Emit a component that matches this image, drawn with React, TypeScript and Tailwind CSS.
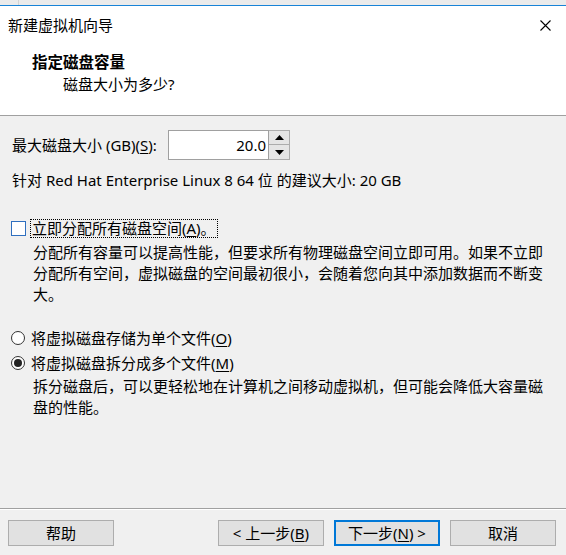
import type { ReactNode } from 'react'

const FONT = "font-['Noto_Sans','Noto_Sans_CJK_SC',sans-serif]"

function Key({ children }: { children: ReactNode }) {
  return <span className="underline underline-offset-2">{children}</span>
}

function Radio({ checked, children }: { checked?: boolean; children: ReactNode }) {
  return (
    <div className="flex items-center h-[20px] pl-[11px]">
      <span className="w-[14px] h-[14px] rounded-full border border-[#333] bg-white flex items-center justify-center">
        {checked && <span className="w-[8px] h-[8px] rounded-full bg-[#222]" />}
      </span>
      <span className="ml-[6px]">{children}</span>
    </div>
  )
}

function Button({ children, primary }: { children: ReactNode; primary?: boolean }) {
  return (
    <div
      className={
        primary
          ? 'w-[106px] h-[26px] flex items-center justify-center bg-[#e1e1e1] border-2 border-[#0078d7]'
          : 'w-[106px] h-[26px] flex items-center justify-center bg-[#e1e1e1] border border-[#adadad]'
      }
    >
      {children}
    </div>
  )
}

export default function App() {
  return (
    <div className={`w-[566px] h-[555px] bg-[#f0f0f0] flex flex-col overflow-hidden text-black text-[15px] ${FONT}`}>
      {/* strip of window behind */}
      <div className="h-[5px] bg-[#ebebeb] flex">
        <div className="ml-[18px] w-px bg-[#d4d4d4]" />
      </div>

      {/* Title + header */}
      <div className="bg-white border-t border-[#1883d7] border-b border-b-[#a0a0a0] h-[111px]">
        <div className="h-[38px] flex items-center justify-between pl-2 pr-[15px]">
          <span className="leading-[20px]">新建虚拟机向导</span>
          <svg width="11" height="11" viewBox="0 0 11 11" fill="none" stroke="#000" strokeWidth="1.1">
            <path d="M0.5 0.5 L10.5 10.5 M10.5 0.5 L0.5 10.5" />
          </svg>
        </div>
        <p className="mt-[8px] pl-8 text-[15.5px] font-bold leading-[20px]">指定磁盘容量</p>
        <p className="mt-[2px] pl-[63px] leading-[20px]">磁盘大小为多少?</p>
      </div>

      {/* Body */}
      <div className="flex-1 flex flex-col">
        <div className="mt-[14px] flex items-center pl-3">
          <span className="w-[156px] shrink-0 whitespace-nowrap leading-[20px]">
            最大磁盘大小 (GB)(<Key>S</Key>):
          </span>
          <div className="flex h-[30px]">
            <div className="w-[101px] h-full bg-white border border-[#a0a0a0] flex items-center justify-end pr-[2px] leading-[20px]">
              20.0
            </div>
            <div className="w-[21px] h-full flex flex-col">
              <div className="h-[15px] bg-[#e5e5e5] border border-[#acacac] border-l-0 flex items-center justify-center">
                <svg width="9" height="5" viewBox="0 0 9 5"><path d="M0 5 L4.5 0 L9 5 Z" fill="#000" /></svg>
              </div>
              <div className="h-[15px] bg-[#e5e5e5] border border-[#acacac] border-l-0 border-t-0 flex items-center justify-center">
                <svg width="9" height="5" viewBox="0 0 9 5"><path d="M0 0 L4.5 5 L9 0 Z" fill="#000" /></svg>
              </div>
            </div>
          </div>
        </div>

        <p className="mt-[10px] pl-3 leading-[20px]">针对 Red Hat Enterprise Linux 8 64 位 的建议大小: 20 GB</p>

        <div className="mt-[28px] flex items-center h-[20px] pl-[11px]">
          <span className="w-[15px] h-[15px] bg-white border border-[#2f6fbf]" />
          <span className="ml-[4px] border border-dotted border-[#000] px-[1px] leading-[17px]">
            立即分配所有磁盘空间(<Key>A</Key>)。
          </span>
        </div>
        <p className="mt-[4px] pl-[33px] w-[549px] leading-[21px]">
          分配所有容量可以提高性能，但要求所有物理磁盘空间立即可用。如果不立即分配所有空间，虚拟磁盘的空间最初很小，会随着您向其中添加数据而不断变大。
        </p>

        <div className="mt-[23px] flex flex-col gap-[5px]">
          <Radio>
            将虚拟磁盘存储为单个文件(<Key>O</Key>)
          </Radio>
          <Radio checked>
            将虚拟磁盘拆分成多个文件(<Key>M</Key>)
          </Radio>
        </div>
        <p className="mt-[3px] pl-[33px] w-[549px] leading-[21px]">
          拆分磁盘后，可以更轻松地在计算机之间移动虚拟机，但可能会降低大容量磁盘的性能。
        </p>
      </div>

      {/* Footer */}
      <div className="border-t border-[#a0a0a0] shadow-[inset_0_1px_0_#ffffff] h-[47px] flex items-start pt-[11px] pl-2 pr-[10px]">
        <Button>帮助</Button>
        <div className="ml-auto flex gap-[10px]">
          <Button>
            &lt; 上一步(<Key>B</Key>)
          </Button>
          <Button primary>
            下一步(<Key>N</Key>) &gt;
          </Button>
          <Button>取消</Button>
        </div>
      </div>
    </div>
  )
}
